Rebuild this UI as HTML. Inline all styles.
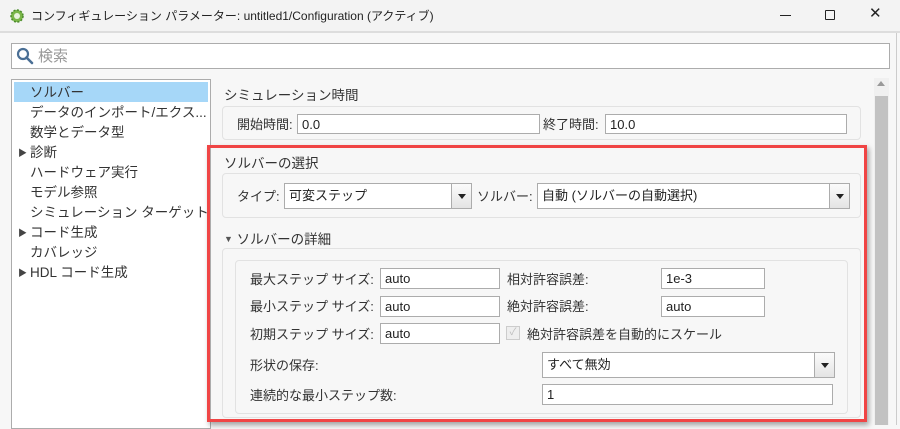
<!DOCTYPE html>
<html><head><meta charset="utf-8"><style>
*{box-sizing:border-box;margin:0;padding:0}
body{width:900px;height:425px;overflow:hidden;background:#f7f7f7;font-family:"Liberation Sans","Noto Sans CJK JP",sans-serif;font-size:13px;color:#333;position:relative}
.a{position:absolute;white-space:nowrap;line-height:16px}
.title{left:0;top:0;width:900px;height:33px;background:#f3f3f3;border-bottom:2px solid #ddd}
.in{position:absolute;background:#fff;border:1px solid #acacac;padding-left:4px;line-height:19px;font-size:13px;color:#222}
.grp{position:absolute;border:1px solid #e2e2e2;border-radius:4px;background:#f7f7f7}
.cb{position:absolute;background:#fff;border:1px solid #acacac;padding-left:4px;font-size:13px;color:#222}
.cb i{position:absolute;right:0;top:0;bottom:0;width:20px;border-left:1px solid #acacac;background:linear-gradient(#fbfbfb,#e4e4e4)}
.cb i:after{content:"";position:absolute;left:6px;top:50%;margin-top:-2px;border:4px solid transparent;border-top:5px solid #222;border-bottom:0}
</style></head><body>
<div class="a title"></div>
<svg class="a" style="left:9px;top:8px" width="16" height="16" viewBox="0 0 16 16"><circle cx="8" cy="8" r="6" fill="#7ab648"/><circle cx="8" cy="8" r="3" fill="#e8f3dc"/><circle cx="8" cy="8" r="6" fill="none" stroke="#4a8a2a" stroke-width="1.5" stroke-dasharray="2 1.5"/></svg>
<div class="a" style="left:31px;top:8px;font-size:12px;color:#222">コンフィギュレーション パラメーター: untitled1/Configuration (アクティブ)</div>
<div class="a" style="left:780px;top:15px;width:11px;height:1px;background:#222"></div>
<div class="a" style="left:825px;top:10px;width:10px;height:10px;border:1px solid #222;border-radius:1px"></div>
<div class="a" style="left:869px;top:6px;font-size:15px;color:#222">✕</div>
<div class="a" style="left:11px;top:43px;width:879px;height:26px;background:#fff;border:1px solid #acacac"></div>
<svg class="a" style="left:16px;top:47px" width="18" height="18" viewBox="0 0 18 18"><circle cx="7" cy="7" r="5" fill="none" stroke="#4a6f95" stroke-width="2.2"/><path d="M10.5 10.5L16 16" stroke="#4a6f95" stroke-width="2.6" stroke-linecap="round"/></svg>
<div class="a" style="left:38px;top:47px;font-size:15px;line-height:19px;color:#999">検索</div>
<div class="a" style="left:11px;top:79px;width:200px;height:350px;background:#fff;border:1px solid #acacac"></div>
<div class="a" style="left:14px;top:82px;width:194px;height:20px;background:#a6d7f8"></div>
<div class="a" style="left:30px;top:83px;line-height:20px;font-size:13.5px;color:#333">ソルバー<br>データのインポート/エクス...<br>数学とデータ型<br>診断<br>ハードウェア実行<br>モデル参照<br>シミュレーション ターゲット<br>コード生成<br>カバレッジ<br>HDL コード生成</div>
<div class="a" style="left:18px;top:143px;font-size:9px;line-height:20px;color:#444">▶<br><br><br><br>▶<br><br>▶</div>
<div class="a" style="left:874px;top:78px;width:15px;height:347px;background:#f0f0f0"></div>
<div class="a" style="left:875px;top:96px;width:13px;height:329px;background:#c2c2c2"></div>
<div class="a" style="left:877px;top:81px;border:4px solid transparent;border-bottom:5px solid #999;border-top:0"></div>
<div class="a" style="left:896px;top:33px;width:1px;height:392px;background:#ccc"></div>

<div class="a" style="left:224px;top:88px;font-size:13.5px">シミュレーション時間</div>
<div class="grp" style="left:222px;top:106px;width:639px;height:34px"></div>
<div class="a" style="left:237px;top:117px">開始時間:</div>
<div class="in" style="left:297px;top:114px;width:243px;height:20px">0.0</div>
<div class="a" style="left:543px;top:117px">終了時間:</div>
<div class="in" style="left:605px;top:114px;width:242px;height:20px">10.0</div>

<div class="a" style="left:207px;top:145px;width:660px;height:277px;border:3px solid #f04545;box-shadow:2px 3px 5px rgba(0,0,0,.35)"></div>
<div class="a" style="left:224px;top:156px;font-size:13.5px">ソルバーの選択</div>
<div class="grp" style="left:222px;top:173px;width:639px;height:45px"></div>
<div class="a" style="left:237px;top:189px">タイプ:</div>
<div class="cb" style="left:284px;top:183px;width:188px;height:26px;line-height:24px">可変ステップ<i></i></div>
<div class="a" style="left:477px;top:189px">ソルバー:</div>
<div class="cb" style="left:537px;top:183px;width:313px;height:26px;line-height:24px">自動 (ソルバーの自動選択)<i></i></div>
<div class="a" style="left:224px;top:231px;font-size:13.5px"><span style="font-size:9px;color:#555;vertical-align:2px">▼</span> ソルバーの詳細</div>
<div class="grp" style="left:222px;top:248px;width:639px;height:170px"></div>
<div class="grp" style="left:235px;top:260px;width:613px;height:154px"></div>
<div class="a" style="left:250px;top:272px">最大ステップ サイズ:</div>
<div class="in" style="left:380px;top:268px;width:120px;height:21px">auto</div>
<div class="a" style="left:507px;top:272px">相対許容誤差:</div>
<div class="in" style="left:661px;top:268px;width:104px;height:21px">1e-3</div>
<div class="a" style="left:250px;top:299px">最小ステップ サイズ:</div>
<div class="in" style="left:380px;top:296px;width:120px;height:21px">auto</div>
<div class="a" style="left:507px;top:299px">絶対許容誤差:</div>
<div class="in" style="left:661px;top:296px;width:104px;height:21px">auto</div>
<div class="a" style="left:250px;top:327px">初期ステップ サイズ:</div>
<div class="in" style="left:380px;top:323px;width:120px;height:21px">auto</div>
<div class="a" style="left:506px;top:326px;width:14px;height:14px;border:1px solid #ccc;background:#eee;font-size:10px;color:#bbb;text-align:center;line-height:12px">✓</div>
<div class="a" style="left:527px;top:327px">絶対許容誤差を自動的にスケール</div>
<div class="a" style="left:250px;top:358px">形状の保存:</div>
<div class="cb" style="left:542px;top:352px;width:293px;height:26px;line-height:24px">すべて無効<i></i></div>
<div class="a" style="left:250px;top:388px">連続的な最小ステップ数:</div>
<div class="in" style="left:542px;top:384px;width:291px;height:21px">1</div>
</body></html>
